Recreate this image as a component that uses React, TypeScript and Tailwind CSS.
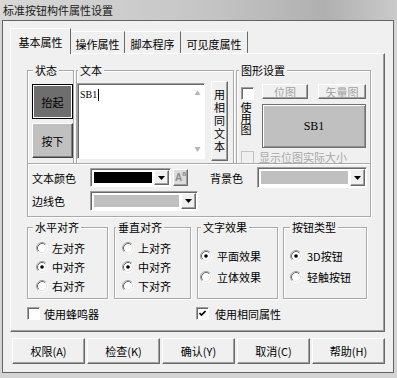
import React from 'react';

const raised =
  'border border-t-white border-l-white border-r-[#696969] border-b-[#696969] shadow-[inset_-1px_-1px_0_#a0a0a0]';
const sunken =
  'border border-t-[#a0a0a0] border-l-[#a0a0a0] border-r-white border-b-white shadow-[inset_1px_1px_0_#696969]';

function Arrow() {
  return (
    <svg width="7" height="4" viewBox="0 0 7 4">
      <path d="M0 0h7L3.5 4z" fill="#000" />
    </svg>
  );
}

function Radio({ checked }: { checked?: boolean }) {
  return (
    <svg width="12" height="12" viewBox="0 0 12 12" className="shrink-0">
      <circle cx="6" cy="6" r="5" fill="#fff" />
      <path d="M2.11 9.89A5.5 5.5 0 0 1 9.89 2.11" fill="none" stroke="#a0a0a0" />
      <path d="M2.82 9.18A4.5 4.5 0 0 1 9.18 2.82" fill="none" stroke="#696969" />
      <path d="M9.89 2.11A5.5 5.5 0 0 1 2.11 9.89" fill="none" stroke="#fff" />
      <path d="M9.18 2.82A4.5 4.5 0 0 1 2.82 9.18" fill="none" stroke="#e3e3e3" />
      {checked && <circle cx="6" cy="6" r="1.8" fill="#000" />}
    </svg>
  );
}

function Check({ checked, disabled, className = '' }: { checked?: boolean; disabled?: boolean; className?: string }) {
  return (
    <span
      className={`flex h-[13px] w-[13px] shrink-0 items-center justify-center ${
        disabled ? 'border border-[#c4c4c4] bg-[#f0f0f0]' : `${sunken} bg-white`
      } ${className}`}
    >
      {checked && (
        <svg width="7" height="7" viewBox="0 0 7 7">
          <path d="M0.5 3l2 2L6.5 1" fill="none" stroke="#000" strokeWidth="1.6" />
        </svg>
      )}
    </span>
  );
}

function Group({
  label,
  labelPos = 'left-[5px]',
  className,
  children,
}: {
  label?: string;
  labelPos?: string;
  className: string;
  children: React.ReactNode;
}) {
  return (
    <div className={`relative border border-[#a9a9a9] shadow-[inset_1px_1px_0_#fff,1px_1px_0_#fff] ${className}`}>
      {label && (
        <span className={`absolute -top-[8px] ${labelPos} bg-[#f0f0f0] px-[2px] leading-[14px]`}>{label}</span>
      )}
      {children}
    </div>
  );
}

function Combo({ className, swatch }: { className: string; swatch: string }) {
  return (
    <div className={`flex bg-white p-px ${sunken} ${className}`}>
      <div className="flex-1 p-[2px]">
        <div className={`h-full ${swatch}`} />
      </div>
      <div className={`flex w-[15px] items-center justify-center bg-[#f0f0f0] ${raised}`}>
        <Arrow />
      </div>
    </div>
  );
}

function RadioRow({ label, checked, className }: { label: string; checked?: boolean; className: string }) {
  return (
    <div className={`flex items-center ${className}`}>
      <Radio checked={checked} />
      <span>{label}</span>
    </div>
  );
}

export default function App() {
  const tabs = [
    { label: '操作属性', w: 'w-[54px]' },
    { label: '脚本程序', w: 'w-[56px]' },
    { label: '可见度属性', w: 'w-[67px]' },
  ];
  const buttons = ['权限(A)', '检查(K)', '确认(Y)', '取消(C)', '帮助(H)'];

  return (
    <div className="h-[378px] w-[397px] overflow-hidden bg-[#d4d4d4] font-['Noto_Sans_CJK_SC',sans-serif] text-[11px] leading-[14px] text-black">
      <div className="flex h-[20px] items-center bg-[linear-gradient(to_right,#d8d8d8,#c6c6c6_50%,#b0b0b0_82%,#cacaca)] pl-[3px] text-[#202020]">
        标准按钮构件属性设置
      </div>

      <div className="ml-[2px] h-[353px] w-[392px] border border-[#646464] bg-[#f0f0f0]">
        {/* tabs */}
        <div className="-mb-px ml-[7px] mt-[7px] flex h-[26px] items-start">
          <div className="relative z-10 h-[26px] w-[61px] border-l border-r border-t border-l-white border-r-[#696969] border-t-white bg-[#f0f0f0] pt-[6px] text-center">
            基本属性
          </div>
          {tabs.map((t) => (
            <div
              key={t.label}
              className={`mt-[3px] h-[22px] ${t.w} border-r border-t border-r-[#696969] border-t-white pt-[5px] text-center`}
            >
              {t.label}
            </div>
          ))}
        </div>

        {/* panel */}
        <div className={`ml-[7px] h-[279px] w-[375px] pl-[16px] pt-[16px] ${raised}`}>
          <div className="flex h-[93px]">
            <Group label="状态" labelPos="left-[5px]" className="h-[93px] w-[47px] border-b-0 pl-[4px] pt-[13px]">
              <div className="flex h-[35px] w-[41px] items-center justify-center border border-black bg-[#6e6e6e] shadow-[inset_0_0_0_1px_#fff]">
                抬起
              </div>
              <div className="mt-[4px] flex h-[35px] w-[41px] items-center justify-center border border-t-white border-l-white border-r-[#404040] border-b-[#404040] bg-[#c0c0c0] shadow-[inset_-1px_-1px_0_#808080]">
                按下
              </div>
            </Group>

            <Group label="文本" labelPos="left-[1px]" className="ml-[2px] flex h-[93px] w-[158px] items-start border-b-0 pt-[10px]">
              <div className={`mt-[2px] flex h-[76px] w-[128px] bg-white ${sunken}`}>
                <div className="flex flex-1 items-start pl-[2px] pt-[5px] font-['Liberation_Serif',serif] text-[10px] leading-[12px]">
                  SB1<span className="ml-[1px] h-[12px] w-px bg-black" />
                </div>
                <div className="flex w-[13px] flex-col items-center justify-between py-[6px] text-[6px] leading-[6px] text-[#b4b4b4]">
                  <span>▲</span>
                  <span>▼</span>
                </div>
              </div>
              <div className={`ml-[6px] flex h-[80px] w-[17px] items-center justify-center bg-[#f0f0f0] ${raised}`}>
                <span className="leading-[12px] tracking-[2px] [writing-mode:vertical-rl]">用相同文本</span>
              </div>
            </Group>

            <Group label="图形设置" labelPos="left-[2px]" className="ml-[2px] h-[93px] w-[135px] border-b-0 pl-[4px] pt-[13px]">
              <div className="flex">
                <div className="w-[21px]">
                  <Check className="mt-[3px]" />
                  <div className="-ml-[1px] mt-[2px] w-[12px] leading-[12px] [writing-mode:vertical-rl]">使用图</div>
                </div>
                <div>
                  <div className="flex">
                    <div className={`flex h-[15px] w-[46px] items-center justify-center text-[#a0a0a0] ${raised}`}>位图</div>
                    <div className={`ml-[10px] flex h-[15px] w-[48px] items-center justify-center text-[#a0a0a0] ${raised}`}>矢量图</div>
                  </div>
                  <div className="mt-[5px] flex h-[44px] w-[104px] items-center justify-center border border-[#707070] bg-[#c0c0c0] font-['Liberation_Serif',serif] text-[12px] shadow-[inset_1px_1px_0_#fff,inset_-1px_-1px_0_#909090]">
                    SB1
                  </div>
                </div>
              </div>
              <div className="mt-[2px] flex items-center text-[#a8a8a8]">
                <Check disabled className="h-[11px] w-[11px]" />
                <span className="ml-[5px]">显示位图实际大小</span>
              </div>
            </Group>
          </div>

          <Group className="h-[54px] w-[344px] pl-[4px] pt-[3px]">
            <div className="flex h-[21px] items-center">
              <span className="w-[58px]">文本颜色</span>
              <Combo className="h-[19px] w-[81px]" swatch="bg-black" />
              <div className={`ml-[2px] flex h-[17px] w-[15px] items-start justify-center bg-[#dcdcdc] pt-[2px] font-['Liberation_Sans',sans-serif] text-[10px] font-bold leading-[12px] text-[#8c8c8c] ${raised}`}>
                A<span className="-mt-[2px] text-[7px] leading-[8px]">a</span>
              </div>
              <span className="ml-[22px] w-[47px]">背景色</span>
              <Combo className="h-[21px] w-[110px]" swatch="bg-[#c0c0c0]" />
            </div>
            <div className="mt-[3px] flex h-[20px] items-center">
              <span className="w-[58px]">边线色</span>
              <Combo className="h-[20px] w-[108px]" swatch="bg-[#c0c0c0]" />
            </div>
          </Group>

          <div className="mt-[10px] flex h-[72px]">
            <Group label="水平对齐" labelPos="left-[5px]" className="h-[72px] w-[81px] pl-[8px] pt-[10px]">
              <RadioRow label="左对齐" className="h-[19px] gap-[4px]" />
              <RadioRow label="中对齐" checked className="h-[19px] gap-[4px]" />
              <RadioRow label="右对齐" className="h-[19px] gap-[4px]" />
            </Group>
            <Group label="垂直对齐" labelPos="left-[1px]" className="ml-[6px] h-[72px] w-[77px] pl-[7px] pt-[10px]">
              <RadioRow label="上对齐" className="h-[19px] gap-[4px]" />
              <RadioRow label="中对齐" checked className="h-[19px] gap-[4px]" />
              <RadioRow label="下对齐" className="h-[19px] gap-[4px]" />
            </Group>
            <Group label="文字效果" labelPos="left-[3px]" className="ml-[6px] h-[72px] w-[81px] pl-[2px] pt-[17px]">
              <RadioRow label="平面效果" checked className="h-[21px] gap-[5px]" />
              <RadioRow label="立体效果" className="h-[21px] gap-[5px]" />
            </Group>
            <Group label="按钮类型" labelPos="left-[6px]" className="ml-[5px] h-[72px] w-[84px] pl-[6px] pt-[17px]">
              <RadioRow label="3D按钮" checked className="h-[21px] gap-[5px]" />
              <RadioRow label="轻触按钮" className="h-[21px] gap-[5px]" />
            </Group>
          </div>

          <div className="mt-[8px] flex h-[13px] items-center">
            <div className="flex w-[169px] items-center gap-[4px]">
              <Check />
              <span>使用蜂鸣器</span>
            </div>
            <div className="flex items-center gap-[6px]">
              <Check checked />
              <span>使用相同属性</span>
            </div>
          </div>
        </div>

        {/* dialog buttons */}
        <div className="ml-[9px] mt-[6px] flex gap-[2px]">
          {buttons.map((b) => (
            <div key={b} className={`flex h-[26px] w-[73px] items-center justify-center bg-[#f0f0f0] ${raised}`}>
              {b}
            </div>
          ))}
        </div>
      </div>
    </div>
  );
}
